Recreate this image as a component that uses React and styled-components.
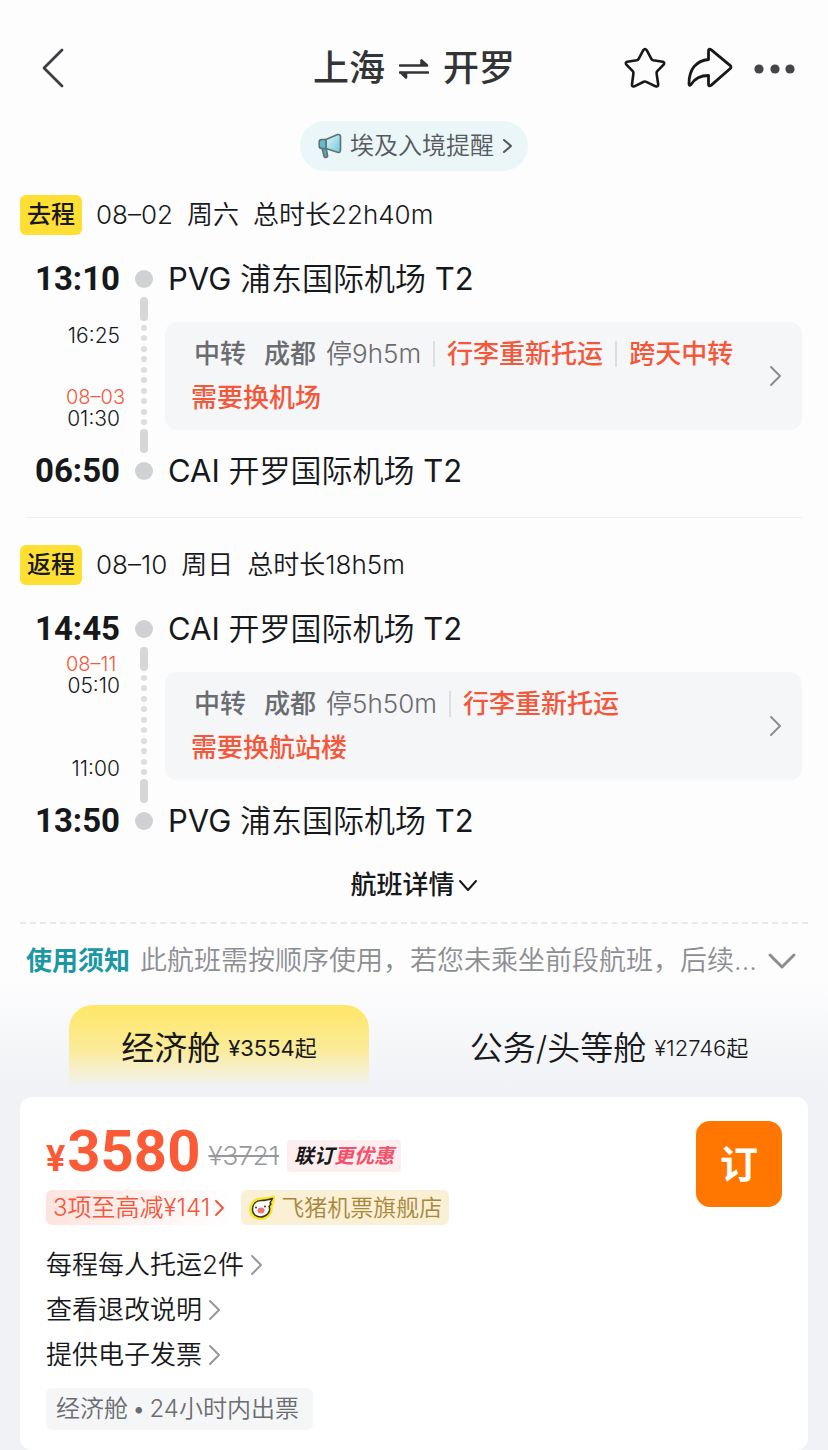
import { Fragment, useState } from 'react';
import styled, { createGlobalStyle } from 'styled-components';

const pvg = { code: 'PVG', name: '浦东国际机场', terminal: 'T2' };
const cai = { code: 'CAI', name: '开罗国际机场', terminal: 'T2' };

const trips = [
  {
    tag: '去程',
    date: '08–02',
    week: '周六',
    duration: '总时长22h40m',
    depart: '13:10',
    arrive: '06:50',
    from: pvg,
    to: cai,
    stops: [{ time: '16:25' }, { date: '08–03', time: '01:30' }],
    stay: '停9h5m',
    warnings: ['行李重新托运', '跨天中转'],
    change: '需要换机场',
  },
  {
    tag: '返程',
    date: '08–10',
    week: '周日',
    duration: '总时长18h5m',
    depart: '14:45',
    arrive: '13:50',
    from: cai,
    to: pvg,
    stops: [{ date: '08–11', time: '05:10' }, { time: '11:00' }],
    stay: '停5h50m',
    warnings: ['行李重新托运'],
    change: '需要换航站楼',
  },
];

const cabins = [
  { name: '经济舱', price: '¥3554起' },
  { name: '公务/头等舱', price: '¥12746起' },
];

const services = ['每程每人托运2件', '查看退改说明', '提供电子发票'];

function Chevron({ width, height, stroke = 2, down }) {
  const d = down
    ? `M${stroke} ${stroke}L${width / 2} ${height - stroke}L${width - stroke} ${stroke}`
    : `M${stroke} ${stroke}L${width - stroke} ${height / 2}L${stroke} ${height - stroke}`;
  return (
    <Icon width={width} height={height} aria-hidden="true">
      <path d={d} strokeWidth={stroke} />
    </Icon>
  );
}

function Airport({ airport }) {
  return (
    <Place>
      {airport.code} <PlaceName>{airport.name}</PlaceName> {airport.terminal}
    </Place>
  );
}

function Trip({ trip }) {
  return (
    <TripSection>
      <TripHead>
        <Tag>{trip.tag}</Tag>
        <span>{trip.date}</span>
        <span>{trip.week}</span>
        <span>{trip.duration}</span>
      </TripHead>
      <TripBody>
        <Times>
          <Clock>{trip.depart}</Clock>
          {trip.stops.map((stop, i) => (
            <Stop key={stop.time} $tall={i > 0}>
              {stop.date && <StopDate>{stop.date}</StopDate>}
              <StopTime>{stop.time}</StopTime>
            </Stop>
          ))}
          <Clock $last>{trip.arrive}</Clock>
        </Times>
        <Rail>
          <Dot />
          <Bar />
          <Dots>
            {Array.from({ length: 10 }, (_, i) => (
              <SmallDot key={i} />
            ))}
          </Dots>
          <Bar />
          <Dot />
        </Rail>
        <Places>
          <Airport airport={trip.from} />
          <Transfer type="button">
            <TransferText>
              <TransferLine $inset>
                <Medium>中转</Medium>
                <City>成都</City>
                <span>{trip.stay}</span>
                {trip.warnings.map((text) => (
                  <Fragment key={text}>
                    <Separator />
                    <Warning>{text}</Warning>
                  </Fragment>
                ))}
              </TransferLine>
              <TransferLine>
                <Warning>{trip.change}</Warning>
              </TransferLine>
            </TransferText>
            <Chevron width={13} height={22} />
          </Transfer>
          <Airport airport={trip.to} />
        </Places>
      </TripBody>
    </TripSection>
  );
}

export default function App() {
  const [cabin, setCabin] = useState(0);

  return (
    <>
      <GlobalStyle />
      <Header>
        <IconButton type="button" aria-label="返回">
          <Icon width="42" height="42">
            <path d="M30 3L12 21L30 39" stroke="#3c3d40" strokeWidth="2.800" />
          </Icon>
        </IconButton>
        <Title>
          上海
          <Icon width="30" height="22" aria-hidden="true">
            <path d="M1 8.500H28L22.500 3.500V8.500M29 15.500H1M7 15.500V20.500L2 15.500" fill="currentColor" strokeWidth="2.600" />
          </Icon>
          开罗
        </Title>
        <Actions>
          <IconButton type="button" aria-label="收藏">
            <Icon width="42" height="42">
              <path
                d="M19.300 3.200Q21 0.800 22.700 3.200L27.200 11.600Q27.800 12.900 29.200 13.200L38.700 14.800Q41.200 15.600 39.600 17.600L33.300 24.200Q32.400 25.200 32.600 26.500L34.200 37.500Q34.200 40.200 31.600 39.300L22.300 34.800Q21 34.200 19.700 34.800L10.400 39.300Q7.800 40.200 8 37.500L9.400 26.500Q9.600 25.200 8.700 24.200L2.400 17.600Q0.800 15.600 3.300 14.800L12.800 13.200Q14.200 12.900 14.800 11.600Z"
                strokeWidth="2.600"
              />
            </Icon>
          </IconButton>
          <IconButton type="button" aria-label="分享">
            <Icon width="46" height="42">
              <path
                d="M21.500 4Q21.500 1 24 2.600L43 18.300Q45 20 43 21.800L24 38.400Q21.500 40 21.500 37V28.500C14 28.500 8 31 4 37.500Q2 39.500 2 36.500C2 22 9.500 13.500 21.500 12.500Z"
                strokeWidth="2.800"
              />
            </Icon>
          </IconButton>
          <IconButton type="button" aria-label="更多">
            <Icon width="42" height="42" viewBox="0 0 42 42">
              <g fill="#444548" stroke="none">
                <circle cx="5" cy="22" r="4.600" />
                <circle cx="21" cy="22" r="4.600" />
                <circle cx="36" cy="22" r="4.600" />
              </g>
            </Icon>
          </IconButton>
        </Actions>
      </Header>

      <Reminder href="#entry">
        <svg width="24" height="26" viewBox="0 0 24 26" aria-hidden="true">
          <defs>
            <linearGradient id="horn" x1="0" x2="1" y1="0" y2="1">
              <stop offset="0" stopColor="#e4f7fa" />
              <stop offset="1" stopColor="#6cc7d6" />
            </linearGradient>
          </defs>
          <g stroke="#5c7278" strokeWidth="1.600" strokeLinejoin="round">
            <path d="M4 15L6 23Q6.500 25 8.500 24.300Q10 23.800 9.500 22L8 15Z" fill="#55a9b8" />
            <path d="M8 6.500L19.500 1.500Q22.500 1 22.500 4V17Q22.500 20 19.500 19.300L8 15.500Z" fill="url(#horn)" />
            <path d="M8 6.500H4Q1.200 6.500 1.200 9V13Q1.200 15.500 4 15.500H8Z" fill="#63bccb" />
          </g>
        </svg>
        埃及入境提醒
        <Chevron width={11} height={16} />
      </Reminder>

      <Trip trip={trips[0]} />
      <Divider />
      <Trip trip={trips[1]} />

      <DetailButton type="button">
        航班详情
        <Chevron width={20} height={13} down />
      </DetailButton>

      <Notice type="button">
        <NoticeTitle>使用须知</NoticeTitle>
        <NoticeText>此航班需按顺序使用，若您未乘坐前段航班，后续...</NoticeText>
        <Chevron width={30} height={18} stroke={3} down />
      </Notice>

      <Offers>
        <Tabs role="tablist">
          {cabins.map((item, i) => (
            <Tab
              key={item.name}
              type="button"
              role="tab"
              aria-selected={cabin === i}
              $active={cabin === i}
              onClick={() => setCabin(i)}
            >
              {item.name}
              <TabPrice>{item.price}</TabPrice>
            </Tab>
          ))}
        </Tabs>

        <Card>
          <CardTop>
            <div>
              <PriceRow>
                <Price>
                  <Currency>¥</Currency>3580
                </Price>
                <PriceExtra>
                  <OldPrice>¥3721</OldPrice>
                  <Combo>
                    联订<ComboHot>更优惠</ComboHot>
                  </Combo>
                </PriceExtra>
              </PriceRow>
              <Labels>
                <Discount type="button">
                  3项至高减¥141
                  <Chevron width={11} height={18} />
                </Discount>
                <Shop>
                  <svg width="30" height="28" viewBox="0 0 30 28" aria-hidden="true">
                    <path
                      d="M3 16C3 9 8 4.500 14 4.500C19 4.500 22 4 27 2.500C27 7 26 10 24.500 13C26 20 20 25 14 25C7.500 25 3 21 3 16Z"
                      fill="#f6e62c"
                      stroke="#f6e62c"
                      strokeWidth="2"
                      strokeLinejoin="round"
                    />
                    <path
                      d="M5.500 16C5.500 10 9 6.500 14.500 6.500C18.500 6.500 22 5.500 25.500 4.500L23 9L24 10L22 12.500C24.500 18 19 23 14 23C9 23 5.500 20 5.500 16Z"
                      fill="#fff"
                      stroke="#3a3414"
                      strokeWidth="1.500"
                      strokeLinejoin="round"
                    />
                    <ellipse cx="14" cy="16.500" rx="3.500" ry="3" fill="#f07478" />
                    <circle cx="9" cy="13.500" r="0.900" fill="#222" />
                    <circle cx="18" cy="12.500" r="0.900" fill="#222" />
                  </svg>
                  飞猪机票旗舰店
                </Shop>
              </Labels>
            </div>
            <BookButton type="button">订</BookButton>
          </CardTop>
          <Services>
            {services.map((text) => (
              <li key={text}>
                <ServiceLink href="#service">
                  {text}
                  <Chevron width={13} height={22} />
                </ServiceLink>
              </li>
            ))}
          </Services>
          <CabinNote>
            经济舱<Bullet>•</Bullet>24小时内出票
          </CabinNote>
        </Card>
      </Offers>
    </>
  );
}

const GlobalStyle = createGlobalStyle`
  * {
    box-sizing: border-box;
  }
  body {
    margin: 0;
    background: #fdfdfe;
    color: #17181a;
    font-family: Inter, 'Noto Sans CJK SC', sans-serif;
    font-size: 26px;
    font-weight: 350;
  }
  button {
    border: none;
    padding: 0;
    background: none;
    color: inherit;
    font: inherit;
    cursor: pointer;
  }
  a {
    color: inherit;
    text-decoration: none;
  }
`;

const Icon = styled.svg`
  display: block;
  flex: none;
  fill: none;
  stroke: currentColor;
  stroke-linecap: round;
  stroke-linejoin: round;
`;

const Header = styled.header`
  display: grid;
  grid-template-columns: 1fr auto 1fr;
  align-items: center;
  height: 121px;
  padding: 15px 32px 0;
`;

const IconButton = styled.button`
  display: flex;
  width: fit-content;
`;

const Title = styled.h1`
  display: flex;
  align-items: center;
  gap: 14px;
  margin: 0;
  color: #333436;
  font-size: 36px;
  font-weight: 500;
  line-height: 48px;
`;

const Actions = styled.div`
  display: flex;
  justify-content: flex-end;
  gap: 21px;
`;

const Reminder = styled.a`
  display: flex;
  align-items: center;
  gap: 8px;
  width: fit-content;
  height: 50px;
  margin: 0 auto;
  padding: 0 15px 0 18px;
  border-radius: 25px;
  background: #ebf6f8;
  color: #55585c;
  font-size: 24px;
  line-height: 50px;
`;

const TripSection = styled.section`
  padding: 24px 26px 0 20px;
`;

const TripHead = styled.div`
  display: flex;
  align-items: center;
  gap: 14px;
  line-height: 40px;
`;

const Tag = styled.span`
  padding: 0 7px;
  border-radius: 6px;
  background: #ffdf33;
  font-size: 24px;
  font-weight: 500;
`;

const TripBody = styled.div`
  display: grid;
  grid-template-columns: 100px 48px 1fr;
  margin-top: 24px;
`;

const Times = styled.div`
  display: flex;
  flex-direction: column;
  align-items: flex-end;
`;

const Clock = styled.div`
  margin-top: ${({ $last }) => ($last ? 'auto' : '0')};
  font-family: Roboto, sans-serif;
  font-size: 33px;
  font-weight: 700;
  line-height: 40px;
`;

const Stop = styled.div`
  display: flex;
  flex-direction: column;
  justify-content: flex-end;
  width: 54px;
  height: ${({ $tall }) => ($tall ? '83px' : '47px')};
  font-size: 21px;
  line-height: 21px;
  white-space: nowrap;
`;

const StopDate = styled.span`
  color: #f4573a;
  font-size: 20px;
`;

const StopTime = styled.span`
  align-self: flex-end;
`;

const Rail = styled.div`
  display: flex;
  flex-direction: column;
  align-items: center;
  padding: 11px 0;
`;

const Dot = styled.span`
  width: 18px;
  height: 18px;
  border-radius: 50%;
  background: #d0d1d4;
`;

const Bar = styled.span`
  width: 8px;
  height: 24px;
  margin: 9px 0;
  border-radius: 4px;
  background: #d6d7d9;
`;

const Dots = styled.div`
  display: flex;
  flex: 1;
  flex-direction: column;
  justify-content: space-between;
  margin: -5px 0;
`;

const SmallDot = styled.span`
  width: 6px;
  height: 6px;
  border-radius: 50%;
  background: #dcdddf;
`;

const Places = styled.div`
  min-width: 0;
`;

const Place = styled.div`
  font-size: 31px;
  font-weight: 400;
  line-height: 40px;
`;

const PlaceName = styled.span`
  font-weight: 350;
`;

const Transfer = styled.button`
  display: flex;
  align-items: center;
  justify-content: space-between;
  width: calc(100% + 3px);
  margin: 23px 0 21px -3px;
  padding: 10px 20px 10px 26px;
  border-radius: 12px;
  background: #f5f6f8;
  color: #8c8e92;
  text-align: left;
`;

const TransferText = styled.span`
  display: block;
`;

const TransferLine = styled.span`
  display: flex;
  align-items: center;
  padding-left: ${({ $inset }) => ($inset ? '3px' : '0')};
  color: #6a6c70;
  line-height: 44px;
`;

const Medium = styled.span`
  font-weight: 500;
`;

const City = styled(Medium)`
  margin: 0 10px 0 18px;
`;

const Separator = styled.span`
  width: 2px;
  height: 26px;
  margin: 0 12px;
  background: #dcdee1;
`;

const Warning = styled.span`
  color: #f4573a;
  font-weight: 500;
`;

const Divider = styled.hr`
  height: 1px;
  margin: 26px 26px 3px;
  border: none;
  background: #eff0f2;
`;

const DetailButton = styled.button`
  display: flex;
  align-items: center;
  gap: 3px;
  margin: 24px auto 17px;
  font-weight: 500;
  line-height: 40px;
`;

const Notice = styled.button`
  display: flex;
  align-items: center;
  width: calc(100% - 40px);
  margin: 0 20px;
  padding: 17px 11px 0 6px;
  border-top: 2px dashed #e8e9eb;
  color: #8c8e92;
  line-height: 40px;
  text-align: left;
`;

const NoticeTitle = styled.span`
  flex: none;
  margin-right: 10px;
  color: #1c97a4;
  font-weight: 700;
`;

const NoticeText = styled.span`
  flex: 1;
  overflow: hidden;
  font-size: 27px;
  white-space: nowrap;
`;

const Offers = styled.section`
  padding: 24px 20px 0;
  background: linear-gradient(#fdfdfe, #f0f2f5 104px);
`;

const Tabs = styled.div`
  display: grid;
  grid-template-columns: 1fr 1fr;
  justify-items: center;
  padding: 0 4px;
`;

const Tab = styled.button`
  display: flex;
  align-items: center;
  justify-content: center;
  gap: 8px;
  min-width: 300px;
  height: 92px;
  padding-bottom: 6px;
  border-radius: 24px 24px 0 0;
  background: ${({ $active }) =>
    $active ? 'linear-gradient(#ffe766, #fbeb9a 45px, #f0f2f500 82px)' : 'none'};
  font-size: 33px;
  font-weight: ${({ $active }) => ($active ? 400 : 350)};
  line-height: 40px;
`;

const TabPrice = styled.span`
  font-size: 22px;
`;

const Card = styled.article`
  padding: 24px 26px 20px;
  border-radius: 12px;
  background: #fff;
`;

const CardTop = styled.div`
  display: flex;
  align-items: flex-start;
  justify-content: space-between;
`;

const PriceRow = styled.div`
  display: flex;
  align-items: flex-end;
  gap: 8px;
  margin-bottom: 9px;
`;

const Price = styled.span`
  color: #fb5a36;
  font-family: Roboto, sans-serif;
  font-size: 58px;
  font-weight: 700;
  line-height: 60px;
`;

const Currency = styled.span`
  margin-right: 2px;
  font-size: 36px;
  line-height: 36px;
`;

const PriceExtra = styled.div`
  display: flex;
  align-items: center;
  gap: 8px;
  padding-bottom: 9px;
  line-height: 32px;
`;

const OldPrice = styled.s`
  color: #96989c;
  font-size: 26px;
`;

const Combo = styled.span`
  padding: 0 7px;
  border-radius: 4px;
  background: #fdeff0;
  font-size: 20px;
  font-style: italic;
  font-weight: 700;
`;

const ComboHot = styled.span`
  color: #f4506a;
`;

const Labels = styled.div`
  display: flex;
  gap: 9px;
  line-height: 34px;
`;

const Discount = styled.button`
  display: flex;
  align-items: center;
  gap: 4px;
  height: 35px;
  padding: 0 7px;
  border-radius: 6px;
  background: linear-gradient(90deg, #fde3df, #fff);
  color: #f4573a;
  font-size: 24px;
  line-height: 34px;
`;

const Shop = styled.span`
  display: flex;
  align-items: center;
  gap: 4px;
  height: 35px;
  padding: 0 7px 0 6px;
  border-radius: 6px;
  background: #faf0d6;
  color: #a8873a;
  font-size: 23px;
`;

const BookButton = styled.button`
  width: 86px;
  height: 86px;
  border-radius: 14px;
  background: #ff7700;
  color: #fff;
  font-size: 38px;
  font-weight: 700;
  line-height: 86px;
`;

const Services = styled.ul`
  margin: 17px 0 11px;
  padding: 0;
  list-style: none;
`;

const ServiceLink = styled.a`
  display: flex;
  align-items: center;
  gap: 6px;
  width: fit-content;
  line-height: 45px;

  svg {
    color: #96989c;
  }
`;

const CabinNote = styled.div`
  width: fit-content;
  padding: 0 14px 0 10px;
  border-radius: 6px;
  background: #f5f6f8;
  color: #6a6c70;
  font-size: 24px;
  line-height: 42px;
`;

const Bullet = styled.span`
  margin: 0 4px;
`;
